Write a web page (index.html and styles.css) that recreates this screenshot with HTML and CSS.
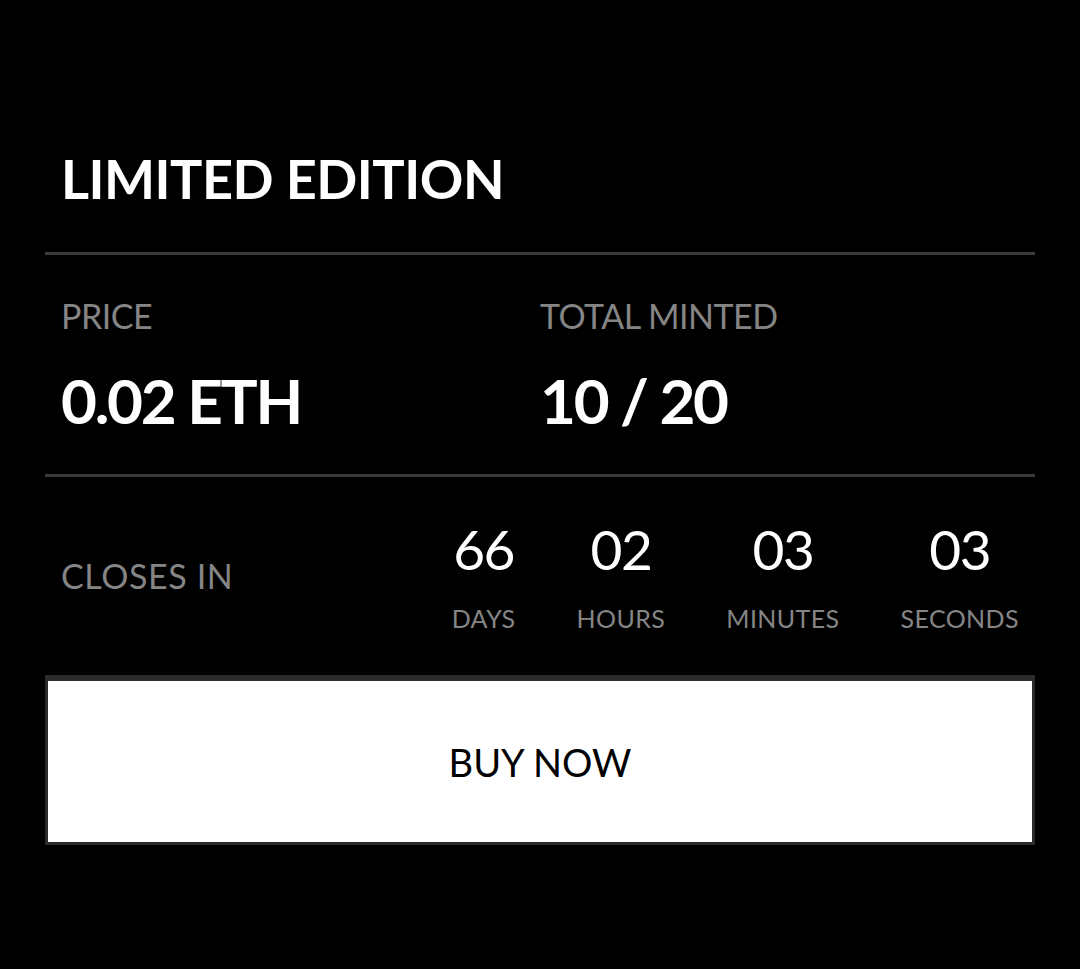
FILE: index.html
```html
<!DOCTYPE html>
<html lang="en">
<head>
  <meta charset="UTF-8">
  <meta name="viewport" content="width=device-width, initial-scale=1.0">
  <title>Limited Edition</title>
  <link rel="stylesheet" href="styles.css">
</head>
<body>
  <div class="card">
    <div class="title-row">
      <h1>LIMITED EDITION</h1>
    </div>

    <div class="stats-row">
      <div class="stat">
        <div class="label">PRICE</div>
        <div class="value">0.02 ETH</div>
      </div>
      <div class="stat">
        <div class="label">TOTAL MINTED</div>
        <div class="value">10 / 20</div>
      </div>
    </div>

    <div class="countdown-row">
      <div class="label closes">CLOSES IN</div>
      <div class="timer">
        <div class="unit">
          <span class="num">66</span>
          <span class="unit-label">DAYS</span>
        </div>
        <div class="unit">
          <span class="num">02</span>
          <span class="unit-label">HOURS</span>
        </div>
        <div class="unit">
          <span class="num">03</span>
          <span class="unit-label">MINUTES</span>
        </div>
        <div class="unit">
          <span class="num">03</span>
          <span class="unit-label">SECONDS</span>
        </div>
      </div>
    </div>

    <button class="buy-button">BUY NOW</button>
  </div>
</body>
</html>
```

FILE: styles.css
```css
body {
  font-family: Lato, "Open Sans", sans-serif;
  margin: 0;
  background-color: #000;
  color: #fff;
}
.card {
  padding: 0 45px;
}
.title-row {
  padding: 152px 16px 46px;
  border-bottom: 3px solid #3a3a3a;
}
h1 {
  margin: 0;
  font-size: 54px;
  line-height: 54px;
  font-weight: 700;
  letter-spacing: -0.5px;
}
.stats-row {
  display: grid;
  grid-template-columns: 1fr 1fr;
  padding: 44px 16px 43px;
  border-bottom: 3px solid #3a3a3a;
}
.label {
  color: #858585;
  font-size: 34px;
  line-height: 34px;
  letter-spacing: -0.5px;
}
.label.closes {
  letter-spacing: 0.6px;
}
.value {
  margin-top: 36px;
  font-size: 62px;
  line-height: 62px;
  font-weight: 700;
  letter-spacing: -2.3px;
}
.countdown-row {
  display: flex;
  align-items: center;
  justify-content: space-between;
  height: 198px;
  padding: 0 16px;
  border-bottom: 3px solid #2b2b2b;
}
.timer {
  display: flex;
  gap: 61px;
}
.unit {
  display: flex;
  flex-direction: column;
  align-items: center;
}
.num {
  font-size: 55px;
  line-height: 55px;
  font-weight: 400;
  letter-spacing: -1.5px;
}
.unit-label {
  margin-top: 29px;
  color: #858585;
  font-size: 25px;
  line-height: 25px;
  letter-spacing: 0.4px;
}
.buy-button {
  display: block;
  width: 100%;
  height: 167px;
  border: 3px solid #2b2b2b;
  background-color: #fff;
  color: #000;
  font-family: inherit;
  font-size: 38px;
  cursor: pointer;
}
```
